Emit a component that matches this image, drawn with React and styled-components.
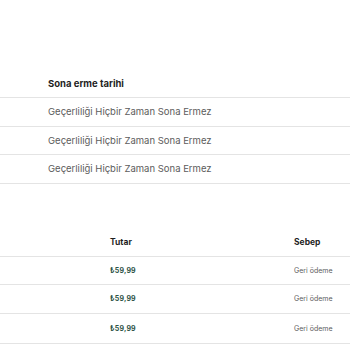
import React from 'react';
import styled, { createGlobalStyle } from 'styled-components';

const GlobalStyle = createGlobalStyle`
  body {
    margin: 0;
    background: #ffffff;
    font-family: Inter, "Liberation Sans", Arial, sans-serif;
  }
`;

const Page = styled.div`
  width: 350px;
  height: 350px;
  overflow: hidden;
  padding-top: 70px;
  box-sizing: border-box;
`;

const Table = styled.div`
  display: grid;
  grid-template-columns: ${props => props.cols};
  margin-bottom: ${props => props.gap || 0}px;
`;

const Cell = styled.div`
  height: ${props => props.h || 28}px;
  display: flex;
  align-items: center;
  border-bottom: 1px solid #e4e4e4;
  font-size: ${props => props.size || 8.5}px;
  color: ${props => props.head ? '#1f1f1f' : props.tone === 'money' ? '#2d5346' : '#5c5c5c'};
  font-weight: ${props => props.head ? 700 : props.tone === 'money' ? 700 : 400};
  letter-spacing: ${props => props.tone === 'money' ? '0.2px' : 'normal'};
  padding-left: ${props => props.pad || 0}px;
  white-space: nowrap;
  box-sizing: border-box;
`;

const expiry = ['Geçerliliği Hiçbir Zaman Sona Ermez', 'Geçerliliği Hiçbir Zaman Sona Ermez', 'Geçerliliği Hiçbir Zaman Sona Ermez'];
const refunds = [
  { amount: '₺59,99', reason: 'Geri ödeme' },
  { amount: '₺59,99', reason: 'Geri ödeme' },
  { amount: '₺59,99', reason: 'Geri ödeme' },
];

export default function App() {
  return (
    <>
      <GlobalStyle />
      <Page>
        <Table cols="1fr" gap={45}>
          <Cell head pad={48} size={9.5}>Sona erme tarihi</Cell>
          {expiry.map((t, i) => (
            <Cell key={i} pad={48} size={9.5} h={28.5}>{t}</Cell>
          ))}
        </Table>
        <Table cols="110px 184px 56px">
          <Cell head />
          <Cell head>Tutar</Cell>
          <Cell head>Sebep</Cell>
          {refunds.map((r, i) => (
            <React.Fragment key={i}>
              <Cell h={i === 0 ? 28 : 29.5} />
              <Cell tone="money" size={7} h={i === 0 ? 28 : 29.5}>{r.amount}</Cell>
              <Cell size={7} h={i === 0 ? 28 : 29.5}>{r.reason}</Cell>
            </React.Fragment>
          ))}
        </Table>
      </Page>
    </>
  );
}
